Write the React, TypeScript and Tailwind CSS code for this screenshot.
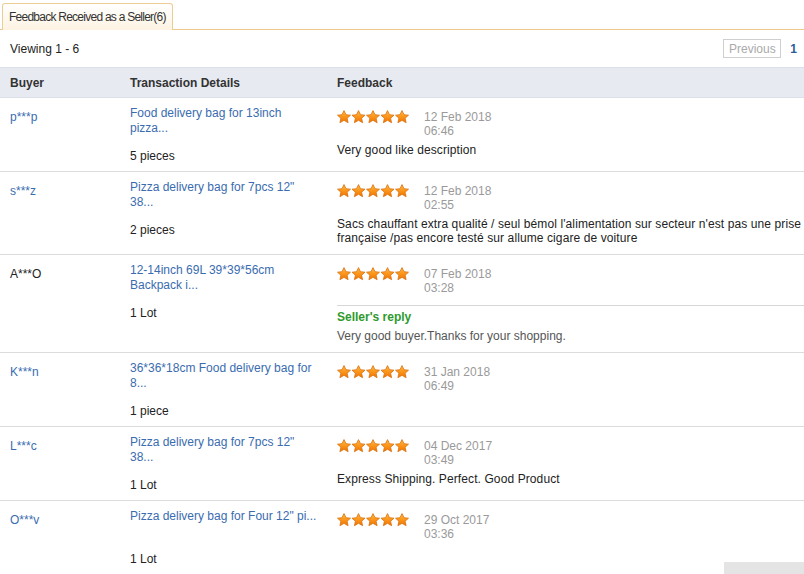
import React from 'react';

type Feedback = {
  buyer: string;
  buyerLink: boolean;
  product: string;
  qty: string;
  date: string;
  time: string;
  comment?: string;
  reply?: string;
};

const FEEDBACKS: Feedback[] = [
  {
    buyer: 'p***p',
    buyerLink: true,
    product: 'Food delivery bag for 13inch pizza...',
    qty: '5 pieces',
    date: '12 Feb 2018',
    time: '06:46',
    comment: 'Very good like description',
  },
  {
    buyer: 's***z',
    buyerLink: true,
    product: 'Pizza delivery bag for 7pcs 12" 38...',
    qty: '2 pieces',
    date: '12 Feb 2018',
    time: '02:55',
    comment:
      "Sacs chauffant extra qualité / seul bémol l'alimentation sur secteur n'est pas une prise française /pas encore testé sur allume cigare de voiture",
  },
  {
    buyer: 'A***O',
    buyerLink: false,
    product: '12-14inch 69L 39*39*56cm Backpack i...',
    qty: '1 Lot',
    date: '07 Feb 2018',
    time: '03:28',
    reply: 'Very good buyer.Thanks for your shopping.',
  },
  {
    buyer: 'K***n',
    buyerLink: true,
    product: '36*36*18cm Food delivery bag for 8...',
    qty: '1 piece',
    date: '31 Jan 2018',
    time: '06:49',
  },
  {
    buyer: 'L***c',
    buyerLink: true,
    product: 'Pizza delivery bag for 7pcs 12" 38...',
    qty: '1 Lot',
    date: '04 Dec 2017',
    time: '03:49',
    comment: 'Express Shipping. Perfect. Good Product',
  },
  {
    buyer: 'O***v',
    buyerLink: true,
    product: 'Pizza delivery bag for Four 12" pi...',
    qty: '1 Lot',
    date: '29 Oct 2017',
    time: '03:36',
  },
];

const Star: React.FC<{ x: number }> = ({ x }) => (
  <path
    transform={`translate(${x} 0)`}
    d="M7 0.6 L9 4.7 L13.5 5.2 L10.1 8.2 L11.1 12.7 L7 10.3 L2.9 12.7 L3.9 8.2 L0.5 5.2 L5 4.7 Z"
    fill="url(#starFill)"
    stroke="#d9700c"
    strokeWidth="0.8"
    strokeLinejoin="round"
  />
);

const Stars: React.FC = () => (
  <svg width="73" height="14" viewBox="0 0 73 14" className="block shrink-0">
    <defs>
      <linearGradient id="starFill" x1="0" y1="0" x2="0" y2="1">
        <stop offset="0" stopColor="#ffbb44" />
        <stop offset="0.55" stopColor="#fb9218" />
        <stop offset="1" stopColor="#ee7300" />
      </linearGradient>
    </defs>
    {[0, 14.5, 29, 43.5, 58].map((x) => (
      <Star key={x} x={x} />
    ))}
  </svg>
);

const FeedbackRow: React.FC<{ item: Feedback }> = ({ item }) => (
  <div className="flex border-b border-[#dcdcdc]">
    <div className="w-[120px] shrink-0 pl-[10px] pt-3 leading-[14px]">
      <span className={item.buyerLink ? 'text-[#3a6cb0]' : 'text-[#222]'}>{item.buyer}</span>
    </div>
    <div className="w-[207px] shrink-0 pl-[10px] pt-2 pb-2">
      <div className="h-[30px] w-[190px] leading-[15px] text-[#3a6cb0]">{item.product}</div>
      <div className="mt-[13px] leading-[14px] text-[#222]">{item.qty}</div>
    </div>
    <div className="flex-1 pl-[10px] pt-3 pb-[9px]">
      <div className="flex">
        <Stars />
        <div className="ml-[14px] leading-[14px] text-[#9a9a9a]">
          <div>{item.date}</div>
          <div>{item.time}</div>
        </div>
      </div>
      {item.comment && (
        <p className="mt-[5px] w-[500px] leading-[14px] tracking-[0.1px] text-[#222]">{item.comment}</p>
      )}
      {item.reply && (
        <div className="mt-[10px] border-t border-[#d6d6d6] pt-1">
          <div className="font-bold leading-[14px] text-[#2e9a2e]">Seller's reply</div>
          <div className="mt-[5px] leading-[14px] text-[#555]">{item.reply}</div>
        </div>
      )}
    </div>
  </div>
);

export default function App() {
  return (
    <div
      className="relative h-[574px] w-[804px] overflow-hidden bg-white text-[12px] text-[#222]"
      style={{ fontFamily: 'Arial, "Liberation Sans", sans-serif' }}
    >
      {/* tab strip */}
      <div className="flex items-end pt-[3px] border-b border-[#efc98c]">
        <div className="ml-[2px] -mb-px flex h-[27px] items-center rounded-t-[3px] border border-b-0 border-[#eccd96] bg-gradient-to-b from-white to-[#fdf3e2] px-[6px] pb-px tracking-[-0.75px] text-[#333]">
          Feedback Received as a Seller(6)
        </div>
      </div>

      {/* pager */}
      <div className="flex h-[37px] items-center justify-between pl-[10px] pr-[7px]">
        <span className="text-[#222]">Viewing 1 - 6</span>
        <div className="flex items-center gap-[9px]">
          <span className="flex h-[19px] w-[58px] items-center justify-center border border-[#cfcfcf] text-[#aaa]">
            Previous
          </span>
          <span className="font-bold text-[#2d5b9a]">1</span>
        </div>
      </div>

      {/* table */}
      <div className="w-[860px]">
        <div className="flex h-[31px] items-center border-t border-[#dde0ea] border-b border-[#c9cbd2] bg-[#e8eaf2] font-bold text-[#333]">
          <div className="w-[120px] shrink-0 pl-[10px]">Buyer</div>
          <div className="w-[207px] shrink-0 pl-[10px]">Transaction Details</div>
          <div className="flex-1 pl-[10px]">Feedback</div>
        </div>
        {FEEDBACKS.map((f, i) => (
          <FeedbackRow key={i} item={f} />
        ))}
      </div>

      <div className="absolute bottom-0 right-0 h-[12px] w-[80px] bg-[#e4e4e4]" />
    </div>
  );
}
